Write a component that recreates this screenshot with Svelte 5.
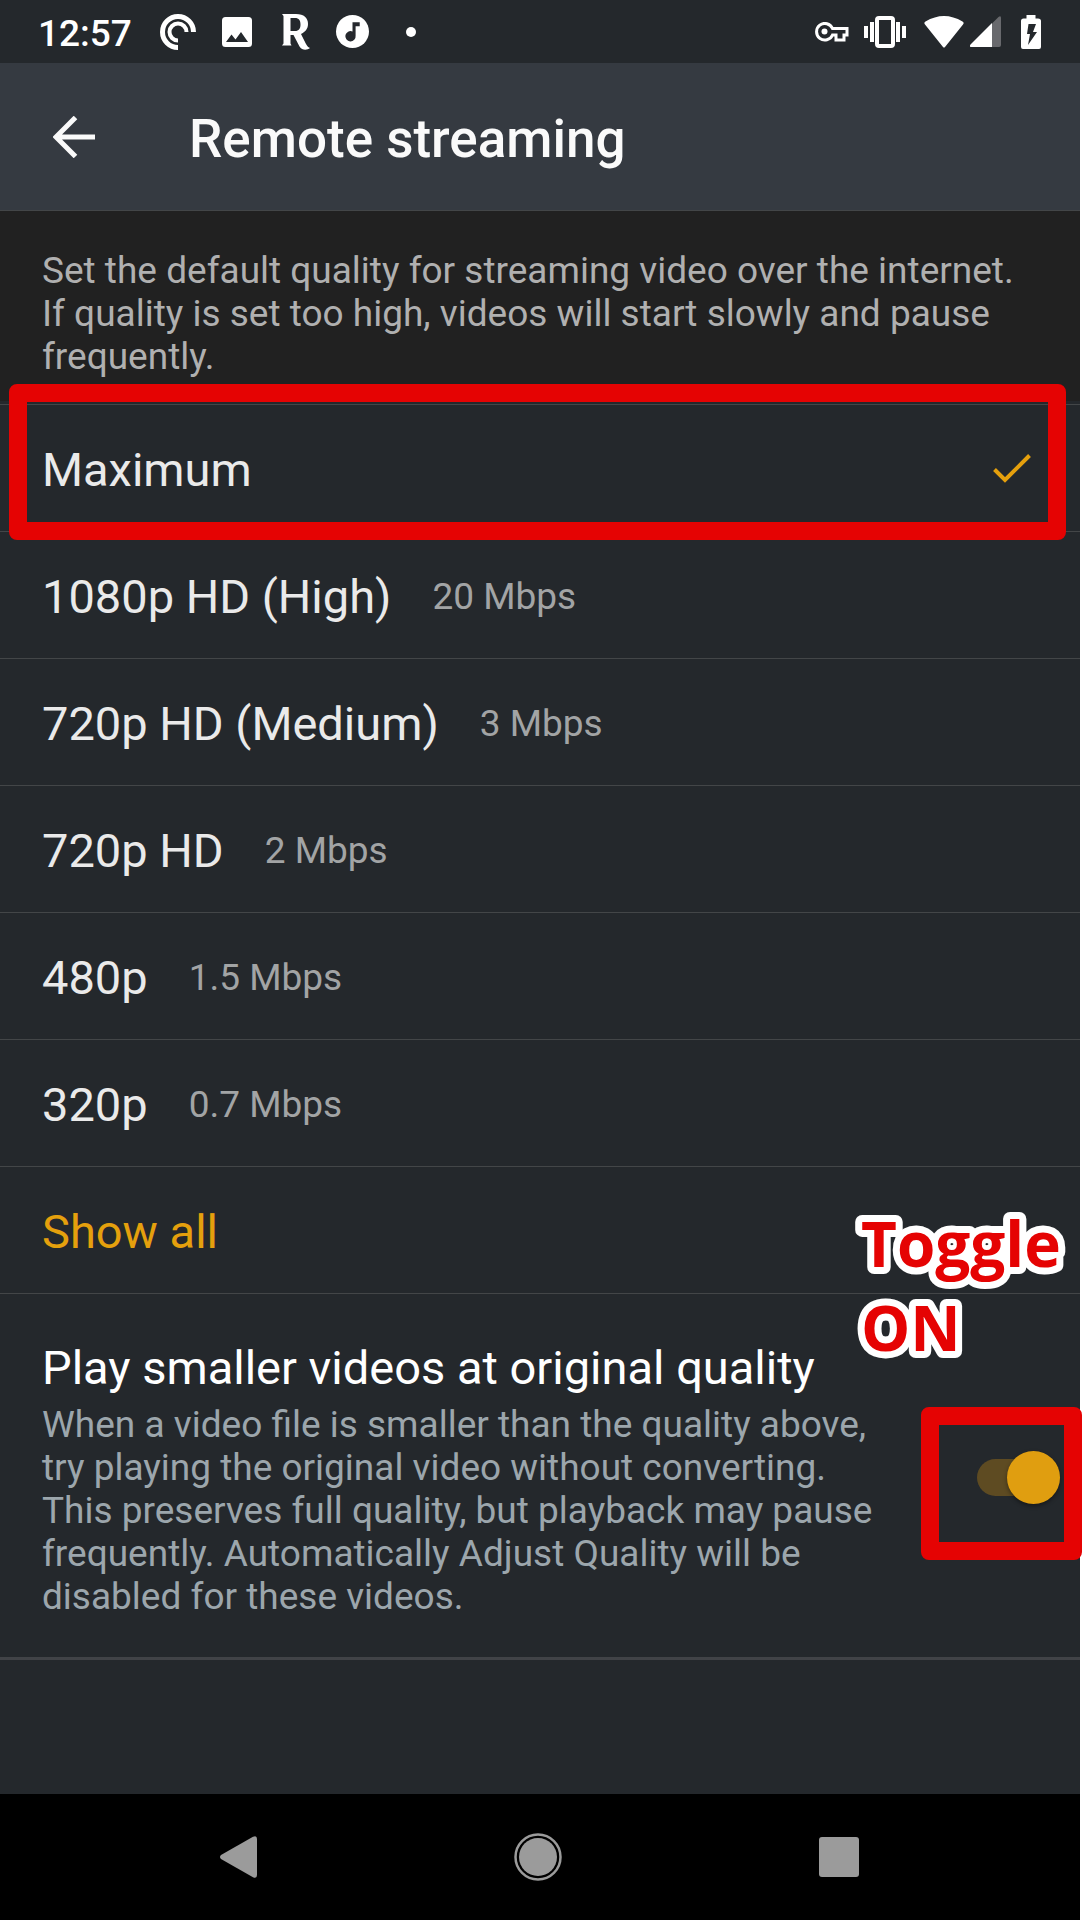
<script>
  const qualities = [
    { name: 'Maximum', rate: '' },
    { name: '1080p HD (High)', rate: '20 Mbps' },
    { name: '720p HD (Medium)', rate: '3 Mbps' },
    { name: '720p HD', rate: '2 Mbps' },
    { name: '480p', rate: '1.5 Mbps' },
    { name: '320p', rate: '0.7 Mbps' },
  ];
  let selected = $state('Maximum');
  let original = $state(true);
</script>

<div class="screen">
  <div class="status">
    <span class="time">12:57</span>
    <div class="notifications">
      <svg width="36" height="36" viewBox="0 0 36 36" fill="none" stroke="#fff">
        <path d="M18 33.500A15.500 15.500 0 1 1 33.500 18" stroke-width="5" />
        <path d="M18 26.500A8.500 8.500 0 1 1 26.500 18" stroke-width="4" />
      </svg>
      <svg width="30" height="30" viewBox="0 0 30 30">
        <path fill="#fff" fill-rule="evenodd" d="M3.500 0h23a3.500 3.500 0 0 1 3.500 3.500v23a3.500 3.500 0 0 1-3.500 3.500h-23a3.500 3.500 0 0 1-3.500-3.500v-23a3.500 3.500 0 0 1 3.500-3.500ZM4 25h22l-7-10-5.500 7.500-4-5Z" />
      </svg>
      <svg class="letter" width="28" height="36" viewBox="0 0 28 36">
        <path fill="#fff" fill-rule="evenodd" d="M0 0h14c8 0 12 4 12 10 0 5-3 8-7 10l5 10c.8 1.500 1.800 3 4 4-3 2.500-8 2.500-10.500-1.500L11.500 21H8.500v8.500L9.500 31.500H0l1.500-2V2ZM8.500 4v13H13c4 0 5.500-2.500 5.500-6.500S17 4 13 4Z" />
      </svg>
      <svg width="33" height="33" viewBox="0 0 32 32">
        <circle cx="16" cy="16" r="16" fill="#fff" />
        <path fill="#25282d" d="M16 7h7v4h-4v9a5 5 0 1 1-3-4Z" />
      </svg>
      <svg class="dot" width="10" height="10" viewBox="0 0 10 10"><circle cx="5" cy="5" r="5" fill="#fff" /></svg>
    </div>
    <div class="system">
      <svg width="34" height="20" viewBox="0 0 34 20">
        <path fill="none" stroke="#fff" stroke-width="3" d="M17.500 6.500H32V13h-3v5h-8v-5h-3.500A8.300 8.300 0 1 1 17.500 6.500Z" />
        <circle cx="9.500" cy="9.500" r="3" fill="#fff" />
      </svg>
      <svg class="vibrate" width="42" height="32" viewBox="0 0 42 32">
        <rect x="13" y="2" width="16" height="28" rx="2" fill="none" stroke="#fff" stroke-width="4" />
        <path fill="#fff" d="M0 10h4v12H0ZM6 6h4v20H6ZM32 6h4v20h-4ZM38 10h4v12h-4Z" />
      </svg>
      <svg class="wifi" width="40" height="32" viewBox="0 0 40 32">
        <path fill="#fff" d="M1 8.500Q-.5 6.500 1.500 5.500Q20-5.500 38.500 5.500Q40.500 6.500 39 8.500L21 31q-1 1-2 0Z" />
      </svg>
      <svg class="signal" width="31" height="31" viewBox="0 0 31 31">
        <path fill="#68696d" d="M22 7.500 28.500 1Q31-1 31 2v27q0 2-2 2h-7Z" />
        <path fill="#fff" d="M22 7v24H1.500Q-1 31 .5 28.500Z" />
      </svg>
      <svg class="battery" width="20" height="34" viewBox="0 0 20 34">
        <path fill="#fff" fill-rule="evenodd" d="M5.500 0h9v3.500H17q3 0 3 2.500v26q0 2-2 2H2q-2 0-2-2V6q0-2.500 2.500-2.500h3ZM7.500 9 6 19h3L7 30l9-13h-4l3-8Z" />
      </svg>
    </div>
  </div>

  <header>
    <button class="back" aria-label="Back">
      <svg width="42" height="42" viewBox="0 0 42 42" fill="none" stroke="#fafafa" stroke-width="5">
        <path d="M42 21H3M22.500 1.500 3 21l19.500 19.500" />
      </svg>
    </button>
    <h1>Remote streaming</h1>
  </header>

  <p class="intro">Set the default quality for streaming video over the internet. If quality is set too high, videos will start slowly and pause frequently.</p>

  <main>
    <div class="list">
      {#each qualities as q, i}
        <button class="row" aria-pressed={selected === q.name} onclick={() => (selected = q.name)}>
          <span class="name">{q.name}</span>
          {#if q.rate}<span class="rate">{q.rate}</span>{/if}
          {#if selected === q.name}
            <svg class="check" width="38" height="30" viewBox="0 0 38 30" fill="none" stroke="#e5a00d" stroke-width="4">
              <path d="M1.500 15.500 12 26 36.500 1.500" />
            </svg>
          {/if}
          {#if i === 0}<span class="mark mark-row"></span>{/if}
        </button>
      {/each}
      <button class="row all">Show all</button>
    </div>

    <div class="setting">
      <label for="original">
        <span class="heading">Play smaller videos at original quality</span>
        <span class="detail">When a video file is smaller than the quality above, try playing the original video without converting. This preserves full quality, but playback may pause frequently. Automatically Adjust Quality will be disabled for these videos.</span>
      </label>
      <div class="switch">
        <input id="original" type="checkbox" role="switch" bind:checked={original} />
        <span class="mark mark-switch"></span>
      </div>
      <svg class="note" width="240" height="180" viewBox="0 0 240 180">
        <text x="21" y="67">Toggle</text>
        <text x="21" y="151">ON</text>
      </svg>
    </div>
  </main>

  <nav>
    <button aria-label="Back">
      <svg width="37" height="42" viewBox="0 0 37 42"><path fill="#9b9b9b" d="M1 23q-2-2 0-4L33 .8Q37-1 37 3v36q0 4-4 2.200Z" /></svg>
    </button>
    <button aria-label="Home">
      <svg width="48" height="48" viewBox="0 0 48 48"><circle cx="24" cy="24" r="22.500" fill="none" stroke="#9b9b9b" stroke-width="2.500" /><circle cx="24" cy="24" r="19" fill="#9b9b9b" /></svg>
    </button>
    <button aria-label="Recent apps">
      <svg width="40" height="40" viewBox="0 0 40 40"><rect width="40" height="40" rx="3" fill="#9b9b9b" /></svg>
    </button>
  </nav>
</div>

<style>
  :global(body) {
    background: #fff;
  }
  * {
    box-sizing: border-box;
  }
  .screen {
    display: flex;
    flex-direction: column;
    min-height: 100vh;
    margin-right: 6px;
    background: #24282c;
    color: #eaeaea;
    font-family: Roboto, sans-serif;
    font-size: 37px;
    line-height: 43px;
  }
  button {
    margin: 0;
    padding: 0;
    border: 0;
    background: none;
    color: inherit;
    font: inherit;
    text-align: left;
  }
  svg {
    display: block;
    flex: none;
  }
  .status {
    display: flex;
    align-items: center;
    height: 63px;
    padding: 0 39px 0 38px;
  }
  .time {
    padding-top: 4px;
    color: #fff;
    font-weight: 500;
  }
  .notifications {
    display: flex;
    align-items: center;
    gap: 26px;
    margin-left: 28px;
  }
  .letter {
    margin-left: 4px;
  }
  .dot {
    margin-left: 11px;
  }
  .system {
    display: flex;
    align-items: center;
    margin-left: auto;
  }
  .vibrate {
    margin-left: 15px;
  }
  .wifi {
    margin-left: 18px;
  }
  .signal {
    margin-left: 6px;
  }
  .battery {
    margin-left: 20px;
  }
  header {
    display: flex;
    align-items: center;
    height: 148px;
    border-bottom: 1px solid #434648;
    padding: 0 53px;
    background: #353a41;
  }
  h1 {
    margin: 0 0 0 94px;
    padding-top: 4px;
    color: #fafafa;
    font-size: 53px;
    font-weight: 500;
    line-height: 62px;
  }
  .intro {
    margin: 0;
    padding: 38px 42px 23px;
    background: #212121;
    color: #b0b0b0;
  }
  main {
    flex: 1;
    padding-top: 3px;
  }
  .row {
    position: relative;
    display: flex;
    align-items: center;
    width: 100%;
    height: 127px;
    border-top: 1px solid #434648;
    padding: 4px 42px 0;
  }
  .name,
  .all,
  .heading {
    font-size: 47px;
    line-height: 56px;
  }
  .rate {
    margin-left: 41px;
    padding-bottom: 2px;
    color: #a2a4a5;
  }
  .check {
    margin-left: auto;
    margin-right: 7px;
    margin-bottom: 2px;
  }
  .all {
    color: #e5a00d;
  }
  .mark {
    position: absolute;
    z-index: 1;
    border: 18px solid #e50303;
    border-radius: 8px;
    pointer-events: none;
  }
  .mark-row {
    inset: -21px 14px -9px 9px;
  }
  .setting {
    position: relative;
    display: flex;
    align-items: center;
    justify-content: space-between;
    border-top: 1px solid #434648;
    border-bottom: 3px solid #414347;
    padding: 46px 20px 39px 42px;
  }
  label {
    width: 840px;
  }
  .heading,
  .detail {
    display: block;
  }
  .heading {
    color: #fff;
  }
  .detail {
    margin-top: 7px;
    color: #9ca6ac;
  }
  .switch {
    position: relative;
    display: flex;
    padding-bottom: 4px;
  }
  input {
    display: flex;
    align-items: center;
    appearance: none;
    width: 83px;
    height: 37px;
    margin: 0;
    border-radius: 19px;
    background: #5e4b22;
  }
  input::before {
    content: '';
    width: 53px;
    height: 53px;
    border-radius: 50%;
    background: #999;
    box-shadow: 0 2px 4px #0006;
  }
  input:checked::before {
    margin-left: auto;
    background: #e09e10;
  }
  .mark-switch {
    inset: -52px -22px -60px -56px;
  }
  .note {
    position: absolute;
    top: -94px;
    right: 0;
    fill: #e50303;
    stroke: #fff;
    stroke-width: 14px;
    stroke-linejoin: round;
    paint-order: stroke fill;
    font-family: 'Open Sans', sans-serif;
    font-size: 62px;
    font-weight: 700;
    pointer-events: none;
  }
  nav {
    display: grid;
    grid-template-columns: repeat(3, 1fr);
    height: 126px;
    padding: 0 91px 0 88px;
    background: #000;
  }
  nav button {
    display: flex;
    align-items: center;
    justify-content: center;
  }
</style>
